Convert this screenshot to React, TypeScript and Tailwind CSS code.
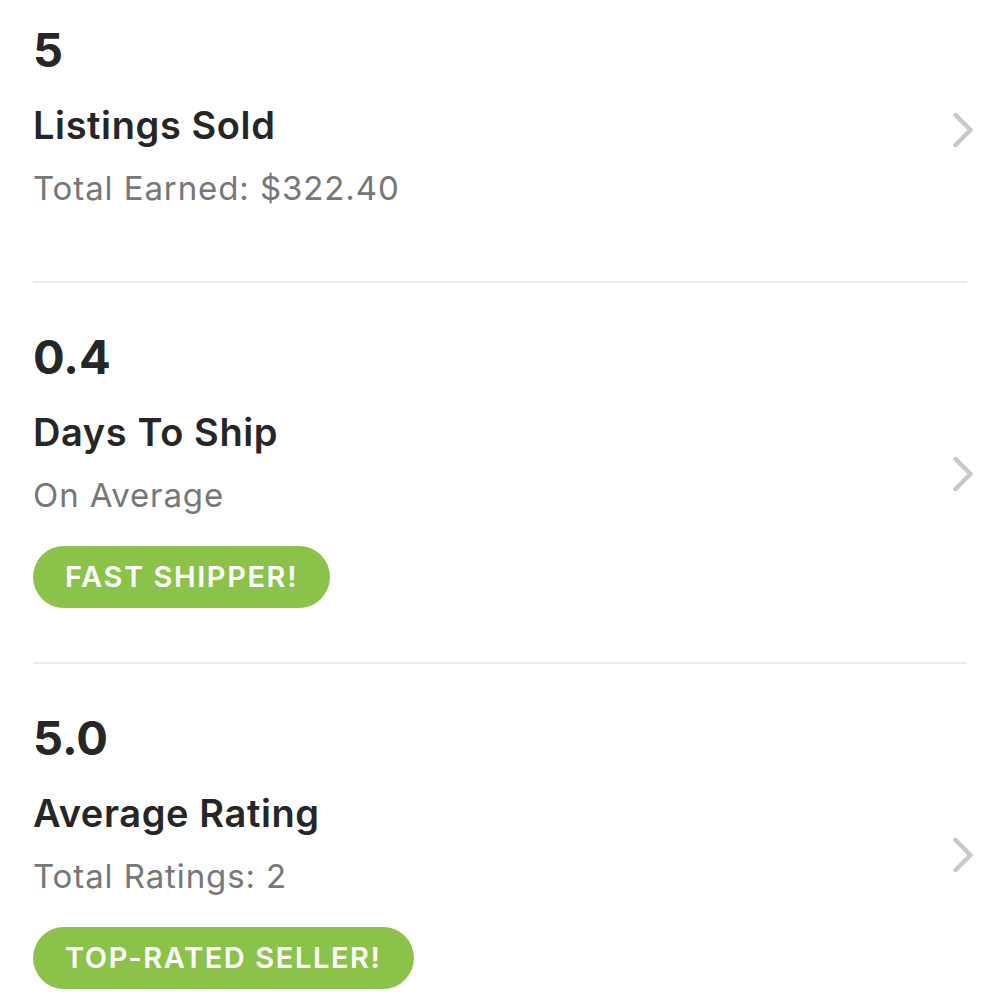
import React from "react";

const Chevron = () => (
  <svg width="22" height="36" viewBox="0 0 22 36" fill="none">
    <path d="M3.5 3 L18.5 18 L3.5 33" stroke="#c8c8c8" strokeWidth="4.5" strokeLinecap="round" strokeLinejoin="round" />
  </svg>
);

type Item = { num: string; title: string; sub: string; badge?: string };

const items: Item[] = [
  { num: "5", title: "Listings Sold", sub: "Total Earned: $322.40" },
  { num: "0.4", title: "Days To Ship", sub: "On Average", badge: "FAST SHIPPER!" },
  { num: "5.0", title: "Average Rating", sub: "Total Ratings: 2", badge: "TOP-RATED SELLER!" },
];

export default function App() {
  return (
    <div className="w-[1000px] h-[1000px] bg-white overflow-hidden" style={{ fontFamily: "Inter, sans-serif" }}>
      <div className="px-[33px] -mt-[24px]">
        {items.map((it, i) => (
          <div key={i} className={i > 0 ? "border-t-2 border-[#ececec]" : ""}>
            <div className="flex justify-between">
              <div className={`flex flex-col pt-[48px] ${it.badge ? "pb-[54px]" : "pb-[73px]"}`}>
                <div className="text-[47px] leading-[52px] font-bold text-[#262626]">{it.num}</div>
                <div className="mt-[27px] text-[38px] leading-[44px] font-semibold tracking-[0.6px] text-[#262626]">{it.title}</div>
                <div className="mt-[21px] text-[33px] leading-[40px] tracking-[0.9px] text-[#777777]">{it.sub}</div>
                {it.badge && (
                  <div className="mt-[31px] self-start h-[62px] px-[32px] rounded-full bg-[#8bc34a] flex items-center text-white font-semibold text-[29px] tracking-[1.6px]">
                    {it.badge}
                  </div>
                )}
              </div>
              <div className="flex items-center pt-[2px] mr-[-7px]">
                <Chevron />
              </div>
            </div>
          </div>
        ))}
      </div>
    </div>
  );
}
